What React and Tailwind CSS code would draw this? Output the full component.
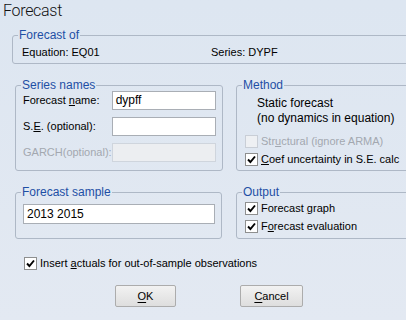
import React from "react";

function Check({ checked, disabled }) {
  return (
    <span
      className={
        "flex h-[13px] w-[13px] shrink-0 items-center justify-center border " +
        (disabled ? "border-[#c9ced6] bg-[#eef0f3]" : "border-[#8e8f8f] bg-white")
      }
    >
      {checked && (
        <svg width="9" height="9" viewBox="0 0 9 9">
          <path d="M1 4.5 L3.4 7 L8 1.5" fill="none" stroke="#000" strokeWidth="1.9" />
        </svg>
      )}
    </span>
  );
}

function CheckRow({ checked, disabled, children }) {
  return (
    <div className={"flex items-center gap-[3px] " + (disabled ? "text-[#a3a8b0]" : "text-black")}>
      <Check checked={checked} disabled={disabled} />
      <span className="whitespace-nowrap">{children}</span>
    </div>
  );
}

function Group({ title, className, children }) {
  return (
    <fieldset className={"rounded-[3px] border border-[#aeb8c6] " + className}>
      <legend className="ml-[5px] px-[1px] leading-[13px] text-[12px] text-[#1e4fa5]">{title}</legend>
      {children}
    </fieldset>
  );
}

function Field({ label, value, disabled }) {
  return (
    <div className="flex items-center justify-between">
      <span className={disabled ? "text-[#a3a8b0]" : "text-black"}>{label}</span>
      <div
        className={
          "h-[19px] w-[104px] border px-[3px] text-[12px] leading-[17px] " +
          (disabled ? "border-[#cfd5dd] bg-[#eceef1]" : "border-[#a9aeb5] bg-white")
        }
      >
        {value}
      </div>
    </div>
  );
}

function Btn({ first, rest, className }) {
  return (
    <button
      className={
        "h-[22px] rounded-[2px] border border-[#acacac] bg-gradient-to-b from-[#f2f2f2] to-[#dedede] text-black " +
        className
      }
    >
      <span className="underline underline-offset-2">{first}</span>
      {rest}
    </button>
  );
}

export default function App() {
  return (
    <div
      className="relative h-[320px] w-[406px] overflow-hidden bg-gradient-to-b from-[#dde6f1] to-[#e3e9f2] text-[11px] text-black"
      style={{ fontFamily: '"Liberation Sans", Arial, sans-serif' }}
    >
      <div
        className="h-[29px] pl-[3px] pt-[1px] text-[16px] font-light leading-[20px] tracking-[-0.3px] text-[#111]"
        style={{ fontFamily: 'Roboto, sans-serif' }}
      >
        Forecast
      </div>

      <div className="w-[460px] pl-[12px]">
        <Group title="Forecast of" className="h-[35px] w-[430px]">
          <div className="flex pl-[9px] pt-[3px] leading-[14px]">
            <span className="w-[189px]">Equation: EQ01</span>
            <span>Series: DYPF</span>
          </div>
        </Group>
      </div>

      <div className="mt-[15px] flex w-[460px] gap-[14px] pl-[15px]">
        <div className="flex w-[207px] shrink-0 flex-col gap-[15px]">
          <Group title="Series names" className="h-[92px]">
            <div className="-mt-px flex flex-col gap-[7px] pl-[7px] pr-[6px]">
              <Field label={<>Forecast <u>n</u>ame:</>} value="dypff" />
              <Field label={<>S.<u>E</u>. (optional):</>} value="" />
              <Field label="GARCH(optional):" value="" disabled />
            </div>
          </Group>
          <Group title="Forecast sample" className="h-[53px]">
            <div className="pl-[7px] pr-[6px] pt-[5px]">
              <div className="h-[20px] border border-[#a9aeb5] bg-white px-[3px] text-[12px] leading-[18px]">2013 2015</div>
            </div>
          </Group>
        </div>

        <div className="flex w-[200px] shrink-0 flex-col gap-[15px]">
          <Group title="Method" className="h-[92px]">
            <div className="pl-[20px] pt-[4px] text-[12px] leading-[15px]">
              <div>Static forecast</div>
              <div>(no dynamics in equation)</div>
            </div>
            <div className="mt-[9px] flex flex-col gap-[5px] pl-[8px] leading-[13px]">
              <CheckRow disabled>
                Str<u>u</u>ctural (ignore ARMA)
              </CheckRow>
              <CheckRow checked>
                <u>C</u>oef uncertainty in S.E. calc
              </CheckRow>
            </div>
          </Group>
          <Group title="Output" className="h-[53px]">
            <div className="flex flex-col gap-[5px] pl-[8px] pt-[3px] leading-[13px]">
              <CheckRow checked>
                Forecast <u>g</u>raph
              </CheckRow>
              <CheckRow checked>
                F<u>o</u>recast evaluation
              </CheckRow>
            </div>
          </Group>
        </div>
      </div>

      <div className="mt-[18px] pl-[24px] leading-[13px]">
        <CheckRow checked>
          Insert <u>a</u>ctuals for out-of-sample observations
        </CheckRow>
      </div>

      <div className="mt-[15px] flex pl-[115px]">
        <Btn first="O" rest="K" className="w-[61px]" />
        <Btn first="C" rest="ancel" className="ml-[64px] w-[63px]" />
      </div>
    </div>
  );
}
